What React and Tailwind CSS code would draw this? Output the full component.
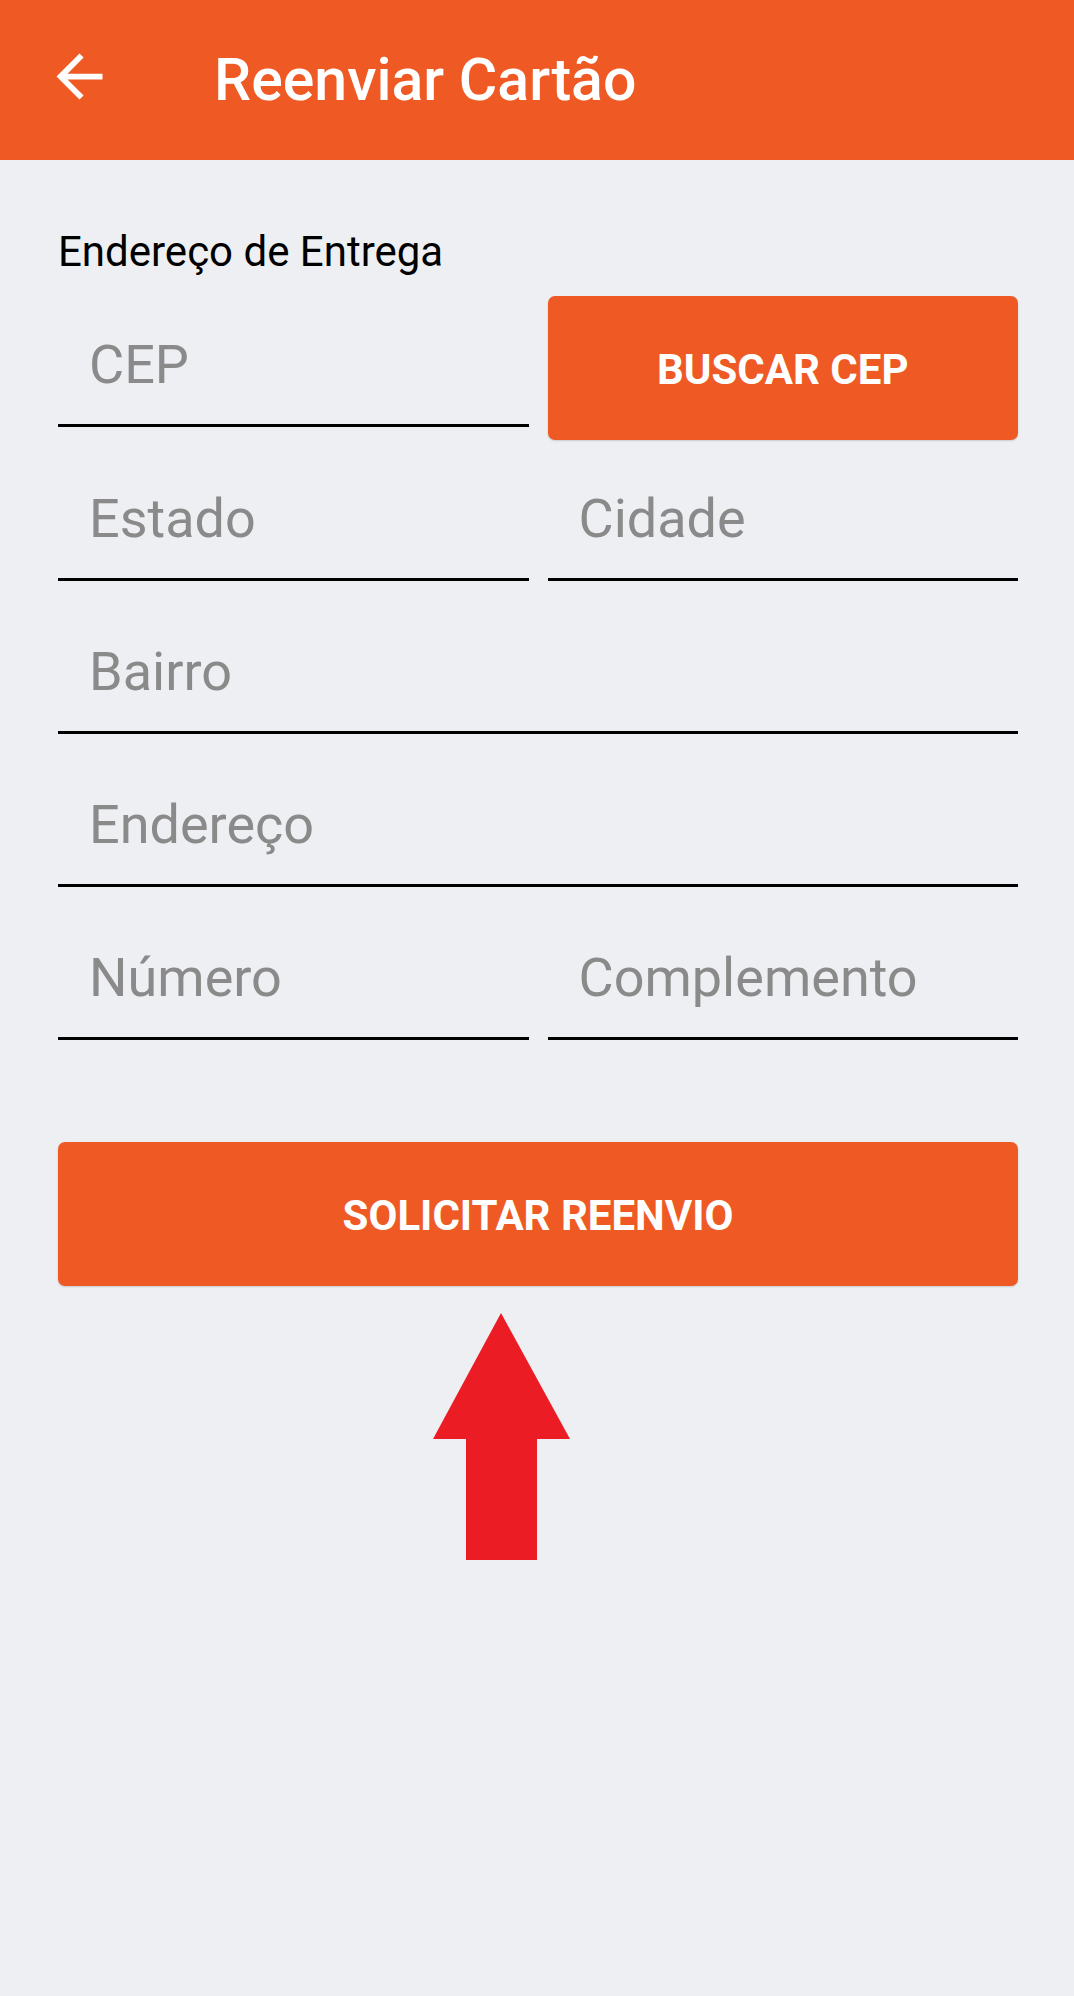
import React from 'react';

const font = { fontFamily: 'Roboto, "Noto Sans", sans-serif' };

function BackArrow() {
  return (
    <svg viewBox="0 0 24 24" className="w-[69px] h-[69px] fill-white">
      <path d="M20 11H7.83l5.59-5.59L12 4l-8 8 8 8 1.41-1.41L7.83 13H20v-2z" />
    </svg>
  );
}

function Field({ placeholder, className = '' }) {
  return (
    <div
      className={`h-[121px] border-b-[3px] border-black flex items-center pl-[31px] ${className}`}
    >
      <span className="text-[54px] leading-none text-[#8a8a8a]">{placeholder}</span>
    </div>
  );
}

function OrangeButton({ children, className = '' }) {
  return (
    <button
      className={`h-[144px] w-full rounded-[7px] bg-[#ef5a24] text-white font-bold text-[42px] leading-none pt-[4px] shadow-[0_1px_2px_rgba(0,0,0,0.15)] ${className}`}
    >
      {children}
    </button>
  );
}

export default function App() {
  return (
    <div className="min-h-[1996px] bg-[#eeeff3]" style={font}>
      {/* toolbar */}
      <header className="h-[160px] bg-[#ef5a24] flex items-center pl-[45px]">
        <div className="-mt-[8px]">
          <BackArrow />
        </div>
        <h1 className="ml-[100px] -mt-[2px] text-white text-[59px] font-medium leading-none">
          Reenviar Cartão
        </h1>
      </header>

      <main className="pl-[58px] pr-[56px] pt-[68px]">
        <p className="text-[42px] leading-[48px] text-black">Endereço de Entrega</p>

        <div className="mt-[20px] grid grid-cols-2 gap-x-[19px] items-start">
          <Field placeholder="CEP" className="mt-[10px]" />
          <OrangeButton>BUSCAR CEP</OrangeButton>
        </div>

        <div className="mt-[20px] grid grid-cols-2 gap-x-[19px]">
          <Field placeholder="Estado" />
          <Field placeholder="Cidade" />
        </div>

        <Field placeholder="Bairro" className="mt-[32px]" />
        <Field placeholder="Endereço" className="mt-[32px]" />

        <div className="mt-[32px] grid grid-cols-2 gap-x-[19px]">
          <Field placeholder="Número" />
          <Field placeholder="Complemento" />
        </div>

        <OrangeButton className="mt-[102px]">SOLICITAR REENVIO</OrangeButton>

        {/* red pointer arrow */}
        <svg viewBox="0 0 137 247" className="mt-[27px] ml-[375px] w-[137px] h-[247px]">
          <polygon
            points="68,0 137,126 104,126 104,247 33,247 33,126 0,126"
            fill="#ec1c24"
          />
        </svg>
      </main>
    </div>
  );
}
